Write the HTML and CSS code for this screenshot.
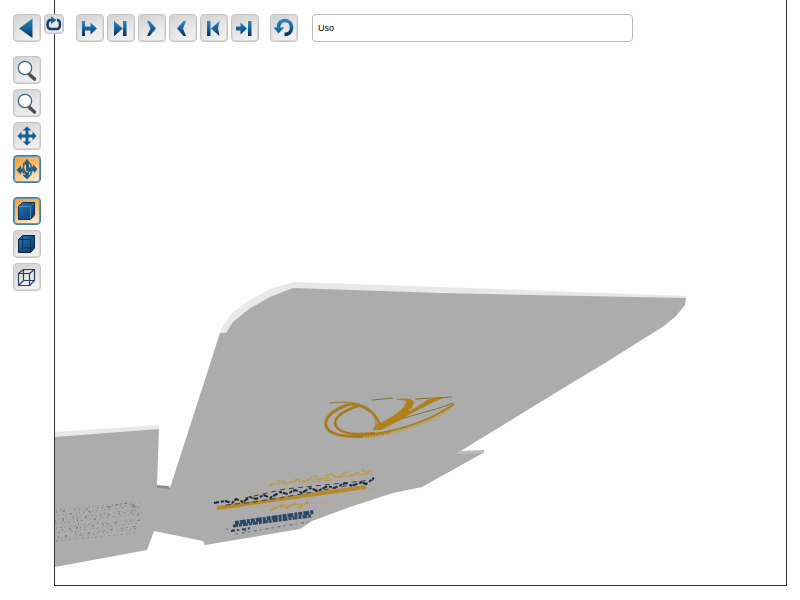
FILE: index.html
```html
<!DOCTYPE html>
<html lang="es">
<head>
<meta charset="utf-8">
<title>Uso</title>
<link rel="stylesheet" href="styles.css">
</head>
<body>
<svg class="defs" width="0" height="0" aria-hidden="true">
  <defs>
    <linearGradient id="blue" x1="0" y1="0" x2="0" y2="1">
      <stop offset="0" stop-color="#2d86c0"/>
      <stop offset="0.5" stop-color="#15629c"/>
      <stop offset="1" stop-color="#0a2c55"/>
    </linearGradient>
    <linearGradient id="cube" x1="0" y1="0" x2="1" y2="1">
      <stop offset="0" stop-color="#2a76b4"/>
      <stop offset="1" stop-color="#083a6c"/>
    </linearGradient>
  </defs>
</svg>

<nav class="rail" aria-label="Vista">
  <button class="btn" type="button" aria-label="Atrás"><svg viewBox="0 0 28 28"><path fill="url(#blue)" d="M6 14.500L19.500 4.500V24Z"/></svg></button>
  <div class="group">
    <button class="btn" type="button" aria-label="Acercar"><svg viewBox="0 0 28 28"><path d="M16.500 18.500L21.500 23" stroke="#505050" stroke-width="3.600" stroke-linecap="round"/><circle cx="12" cy="12" r="6.700" fill="#fff" stroke="#35658f" stroke-width="1.200"/></svg></button>
    <button class="btn" type="button" aria-label="Alejar"><svg viewBox="0 0 28 28"><path d="M16.500 18.500L21.500 23" stroke="#505050" stroke-width="3.600" stroke-linecap="round"/><circle cx="12" cy="12" r="6.700" fill="#fff" stroke="#35658f" stroke-width="1.200"/></svg></button>
    <button class="btn" type="button" aria-label="Mover"><svg viewBox="0 0 28 28"><path fill="#145f99" d="M14 4.500L18.500 8.500H15.500V12.500H19.500V9.500L23.500 14L19.500 18.500V15.500H15.500V19.500H18.500L14 23.500L9.500 19.500H12.500V15.500H8.500V18.500L4.500 14L8.500 9.500V12.500H12.500V8.500H9.500Z"/></svg></button>
    <button class="btn active" type="button" aria-label="Girar" aria-pressed="true"><svg viewBox="0 0 28 28"><path fill="#245f86" d="M14 4L18 9H16V20H18L14 24.500L9.500 20H12V9H10Z"/><path fill="#245f86" d="M3.500 15L8 10.500V13.500L12 14V17L8 17.500V20Z"/><path fill="#245f86" d="M16 12.500L20 12V9.500L24.500 14L21 18.500V16L16 17Z"/><path d="M11 8Q9.500 13 11 19M17.500 9Q20 14 17.500 20" fill="none" stroke="#2a688d" stroke-width="1.600"/><path d="M12.500 10V16L15 17" fill="none" stroke="#c4dce0"/></svg></button>
  </div>
  <div class="group">
    <button class="btn active" type="button" aria-label="Sólido" aria-pressed="true"><svg viewBox="0 0 28 28"><path fill="url(#cube)" stroke="#0b3258" d="M5.500 9.500L9.500 5.500H21.500V18L17.500 22.500H5.500Z"/><path fill="none" stroke="#5b9ac8" stroke-width=".8" d="M6 9.500H17.500V22M17.500 9.500L21 6"/></svg></button>
    <button class="btn" type="button" aria-label="Sólido con aristas"><svg viewBox="0 0 28 28"><path fill="url(#cube)" stroke="#082344" d="M5.500 9.500L9.500 5.500H21.500V18L17.500 22.500H5.500Z"/><path fill="none" stroke="#082344" stroke-width=".8" d="M5.500 9.500H17.500V22.500M17.500 9.500L21.500 5.500M9.500 6V18H21M9.500 18L5.500 22"/></svg></button>
    <button class="btn" type="button" aria-label="Alambre"><svg viewBox="0 0 28 28"><path fill="none" stroke="#263f68" stroke-width="1.200" d="M5.500 10.500H16.500V22.500H5.500ZM10.500 6.500H21.500V17.500H10.500ZM5.500 10.500L10.500 6.500M16.500 10.500L21.500 6.500M16.500 22.500L21.500 17.500M5.500 22.500L10.500 17.500"/></svg></button>
  </div>
</nav>

<main class="viewer">
  <button class="btn small" type="button" aria-label="Repetir"><svg viewBox="0 0 20 20"><path fill="none" stroke="#103f70" stroke-width="2.500" d="M8 6H7Q3.500 6 3.500 10.500Q3.500 15 7 15H12.500Q16 15 16 10.500Q16 6 13 6"/><path fill="#1767a1" d="M7 2.500L12.500 6L7 10Z"/></svg></button>

  <div class="toolbar" role="toolbar" aria-label="Reproducción">
    <button class="btn" type="button" aria-label="Avanzar desde inicio"><svg viewBox="0 0 28 28"><path fill="url(#blue)" d="M6 7H9V22H6ZM9 12.500H14.500V8.500L21 14.500L14.500 20.500V16.500H9Z"/></svg></button>
    <button class="btn" type="button" aria-label="Siguiente"><svg viewBox="0 0 28 28"><path fill="url(#blue)" d="M7 7L15.500 14.500L7 22L8.500 14.500ZM16 7H19.500V22H16Z"/><path fill="url(#blue)" d="M7 7L15.500 14.500L7 22Z"/></svg></button>
    <button class="btn" type="button" aria-label="Reproducir"><svg viewBox="0 0 28 28"><path fill="url(#blue)" d="M9 7H11.500L18 14.500L11.500 22H9L12.500 14.500Z"/></svg></button>
    <button class="btn" type="button" aria-label="Reproducir atrás"><svg viewBox="0 0 28 28"><path fill="url(#blue)" d="M17 7H14.500L8 14.500L14.500 22H17L14 14.500Z"/></svg></button>
    <button class="btn" type="button" aria-label="Anterior"><svg viewBox="0 0 28 28"><path fill="url(#blue)" d="M19.500 7L11 14.500L19.500 22L18 14.500ZM7 7H10.500V22H7Z"/></svg></button>
    <button class="btn" type="button" aria-label="Ir al final"><svg viewBox="0 0 28 28"><path fill="url(#blue)" d="M17 7H20.500V22H17ZM5 12.500H9.500V8.500L16 14.500L9.500 20.500V16.500H5Z"/></svg></button>
    <button class="btn reset" type="button" aria-label="Restablecer"><svg viewBox="0 0 28 28"><path fill="none" stroke="url(#blue)" stroke-width="3.600" d="M8.500 13.500C8.500 8.500 11.500 6.500 15 6.500C19 6.500 21.500 9.500 21.500 13.500C21.500 18 18.500 20.500 14.500 20.500"/><path fill="#1767a1" d="M3.500 13.500H14L8.500 19.500Z"/></svg></button>
    <input class="field" type="text" aria-label="Animación" value="Uso">
  </div>

  <svg class="model" viewBox="55 42 731 543" preserveAspectRatio="xMinYMin meet" role="img" aria-label="Modelo de caja">
    <!-- lit edges of the board -->
    <path fill="#e8e8e8" d="M220 333L223 325L232 313L248 301L270 289L293 282L440 287L686 296V300L293 290L230 335Z"/>
    <path fill="#e8e8e8" d="M55 432L159 425V431L55 438Z"/>
    <!-- panels -->
    <path fill="#acacac" d="M220 333H226L233 322L249 309L270 297L293 288L440 293L686 298L685 305L676 316L664 326L605 363L570 384L459 452L483 451V453L422 487L393 493L350 507L312 521L300 529L205 545L203 541L154 531L147 550L55 567V437L159 429L157 486L170 488Z"/>
    <path fill="#8d8d8d" d="M157 485L169 486L170 489L157 488Z"/>
    <path fill="#bcbcbc" d="M459 451L484 450V453L457 454Z"/>
    <!-- brand mark -->
    <g fill="none" stroke="#a87b1c">
      <path stroke-width="3" d="M350 404C332 410 322 419 327 428C334 439 366 438 390 432"/>
      <path stroke-width="2.500" d="M358 406C342 411 332 419 336 426C341 435 360 435 375 433"/>
      <path stroke-width="1.500" stroke="#a58b4e" d="M329 403C350 401 364 403 371 411C376 417 378 423 375 429"/>
      <path stroke-width="2.500" d="M350 404C366 405 378 415 380 426"/>
      <path stroke-width="2" d="M375 434C405 429 433 419 454 404"/>
      <path stroke-width="1" stroke="#7d7438" d="M382 425C410 415 434 411 453 403M372 400L393 398M415 399L452 397"/>
      <path stroke-width="2" stroke="#c0a050" stroke-dasharray="2 1" d="M363 437C390 435 425 425 450 409"/>
    </g>
    <path fill="#b08019" d="M373 430L375 426L384 421C394 416 406 408 406 402C406 400 400 400 396 400C404 397 415 399 414 403C413 406 410 410 407 412C418 407 425 401 431 398H444C425 404 402 420 381 430Z"/>
    <!-- printed decoration near the lower flap -->
    <g fill="none">
      <path stroke="#b8a87e" stroke-width="1" d="M208 514L236 500L273 479M232 504C270 486 313 489 374 489M232 508L355 501L374 490"/>
      <path stroke="#bc9a50" stroke-width="2" stroke-dasharray="7 2 4 1" d="M269 486L281 480L287 484L298 479L304 482L315 476L319 480L331 474L337 478L347 472L352 476L363 470L368 473L372 468"/>
      <path stroke="#bc9a50" stroke-width="1" stroke-dasharray="9 3" d="M275 484L369 474M312 482L334 480"/>
      <path stroke="#b78a27" stroke-width="4" d="M217 508L366 487"/>
      <path stroke="#18263e" stroke-width="2" stroke-dasharray="5 2 3 1" d="M214 503L225 501L232 503L236 499L243 502L250 497L256 499L264 495L270 498L280 492L287 494L295 490L302 493L310 488L318 491L328 486L334 488L346 483L352 486L361 482L366 484L374 478"/>
      <path stroke="#30405a" stroke-width="1" stroke-dasharray="5 4" d="M226 505L255 502L285 497L368 482M245 498L285 489L373 480"/>
      <path stroke="#bd9646" stroke-width="2" stroke-dasharray="6 2" d="M271 510L282 505L287 508L295 503L299 508L308 502"/>
      <path stroke="#bd9646" stroke-width="1" stroke-dasharray="6 2" d="M273 508L309 503"/>
      <path stroke="#2d4566" stroke-width="4" stroke-dasharray="4 1 6 1 3 1" d="M235 523L314 512"/>
      <path stroke="#2d4566" stroke-width="3" stroke-dasharray="5 1 3 1" d="M233 526L311 516"/>
      <path stroke="#223e63" stroke-width="2" stroke-dasharray="4 2 2 3" d="M231 531L252 528"/>
      <path stroke="#596477" stroke-width="1" stroke-dasharray="2 4 3 3" d="M236 534L308 522M226 529L248 531"/>
    </g>
    <!-- fine print on the side flap -->
    <g fill="none" stroke="#858a8f" stroke-width="1">
      <path stroke-dasharray="1 3 2 2 1 5" d="M56 510L142 502M58 519L141 509M56 528L140 519M61 538L139 528"/>
      <path stroke-dasharray="2 4 1 2 1 3" d="M57 515L141 506M55 524L142 513M58 533L137 523M56 541L135 533"/>
      <path stroke="#666b72" stroke-dasharray="1 6 2 9 1 4" d="M56 512L142 504M55 521L140 511M62 530L140 520M58 537L138 526"/>
      <path stroke="#5f656d" stroke-dasharray="2 3 1 3" d="M70 513L79 522L75 533M89 511L98 523M107 507L125 503L141 508M133 506L139 517"/>
    </g>
  </svg>
</main>
</body>
</html>
```
FILE: styles.css
```css
* {
  box-sizing: border-box;
}

body {
  margin: 0;
  min-height: 100vh;
  display: flex;
  background: #fefefe;
  font-family: "Liberation Sans", Arial, sans-serif;
}

.defs {
  position: absolute;
}

.rail {
  flex: none;
  display: flex;
  flex-direction: column;
  gap: 14px;
  padding: 14px 13px;
}

.group {
  display: flex;
  flex-direction: column;
  gap: 5px;
}

.btn {
  flex: none;
  width: 28px;
  height: 28px;
  padding: 0;
  border: 1px solid #c6c4c4;
  border-radius: 4px;
  background: linear-gradient(155deg, #d0d0d2, #e9e7e6 55%, #f5f4f3);
  box-shadow: inset 0 0 0 1px #dad8d8;
}

.btn svg {
  display: block;
  width: 28px;
  height: 28px;
  margin: -1px;
}

.btn.active {
  border-color: #427f9f;
  background: linear-gradient(155deg, #f49a32, #fbb968 45%, #fff4e6);
  box-shadow: inset 0 0 0 1px #5d9bb5;
}

.btn.small {
  position: absolute;
  top: 14px;
  left: -11px;
  width: 20px;
  height: 20px;
}

.btn.small svg {
  width: 20px;
  height: 20px;
}

.viewer {
  position: relative;
  flex: 1;
  min-width: 0;
  display: flex;
  flex-direction: column;
  margin: 0 13px 14px 0;
  border: 1px solid #333;
  border-top: 0;
}

.toolbar {
  display: flex;
  gap: 3px;
  padding: 14px 21px 0;
}

.btn.reset {
  margin: 0 11px 0 8px;
}

.field {
  width: 321px;
  min-width: 0;
  height: 28px;
  padding: 0 5px;
  border: 1px solid #b9b9b9;
  border-radius: 4px;
  background: #fff;
  color: #000;
  font: 9px "Liberation Sans", Arial, sans-serif;
}

.model {
  display: block;
  width: 100%;
}
```
